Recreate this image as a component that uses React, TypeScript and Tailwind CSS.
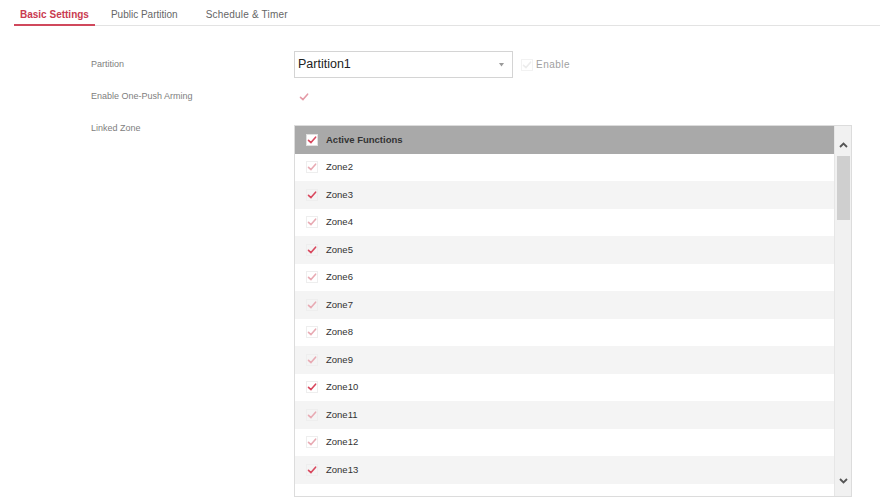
import React from "react";

function Check({ color = "#e7a3ad", box = "#e4e4e4", bg = "transparent" }: { color?: string; box?: string; bg?: string }) {
  return (
    <svg width="12" height="12" viewBox="0 0 12 12" className="shrink-0">
      <rect x="0.5" y="0.5" width="11" height="11" fill={bg} stroke={box} />
      <polyline points="2.5,6.3 5,8.6 9.6,3.2" fill="none" stroke={color} strokeWidth="1.6" strokeLinecap="round" strokeLinejoin="round" />
    </svg>
  );
}

const zones = [
  { n: "Zone2", dark: false },
  { n: "Zone3", dark: true },
  { n: "Zone4", dark: false },
  { n: "Zone5", dark: true },
  { n: "Zone6", dark: false },
  { n: "Zone7", dark: false },
  { n: "Zone8", dark: false },
  { n: "Zone9", dark: false },
  { n: "Zone10", dark: true },
  { n: "Zone11", dark: false },
  { n: "Zone12", dark: false },
  { n: "Zone13", dark: true },
];

export default function App() {
  return (
    <div className="w-[893px] h-[498px] bg-white overflow-hidden font-['Liberation_Sans',Arial,sans-serif]">
      {/* Tabs */}
      <div className="ml-[14px] w-[866px] h-[26px] flex items-end border-b border-[#e3e3e3] text-[10px]">
        <div className="h-[26px] px-[6px] pt-[5px] flex items-center border-b-2 border-[#d0485c] -mb-px text-[#c93a50] font-bold">
          Basic Settings
        </div>
        <div className="h-[26px] px-[16px] pt-[5px] flex items-center text-[#666]">Public Partition</div>
        <div className="h-[26px] px-[12px] pt-[5px] flex items-center text-[#666] tracking-[0.2px]">Schedule &amp; Timer</div>
      </div>

      <div className="pl-[91px] pt-[25px]">
        {/* Partition */}
        <div className="flex items-center h-[27px]">
          <div className="w-[203px] text-[9px] text-[#808080]">Partition</div>
          <div className="w-[219px] h-[27px] border border-[#d4d4d4] flex items-center pl-[3px] pr-[8px]">
            <span className="flex-1 text-[12.5px] text-[#222]">Partition1</span>
            <svg width="5" height="4" viewBox="0 0 5 4">
              <polygon points="0,0 5,0 2.5,3.5" fill="#9a9a9a" />
            </svg>
          </div>
          <div className="ml-[8px] flex items-center gap-[3px]">
            <Check color="#ececec" box="#f2f2f2" />
            <span className="text-[10px] text-[#a0a0a0] tracking-[0.5px]">Enable</span>
          </div>
        </div>

        {/* One-push arming */}
        <div className="flex items-center h-[14px] mt-[12px]">
          <div className="w-[203px] text-[9px] text-[#808080]">Enable One-Push Arming</div>
          <div className="pl-[4px]">
            <Check color="#e49aa6" box="#ffffff" />
          </div>
        </div>

        {/* Linked zone */}
        <div className="flex items-start mt-[17px]">
          <div className="w-[203px] text-[9px] leading-[14px] text-[#808080]">Linked Zone</div>
          <div className="mt-[4px] w-[558px] h-[372px] border border-[#dcdcdc] flex overflow-hidden">
            <div className="flex-1 flex flex-col overflow-hidden">
              <div className="h-[27.5px] shrink-0 bg-[#a9a9a9] flex items-center pl-[11px] gap-[8px]">
                <Check color="#d9485e" box="#e0e0e0" bg="#ffffff" />
                <span className="text-[9.5px] text-[#333] font-bold">Active Functions</span>
              </div>
              {zones.map((z, i) => (
                <div
                  key={z.n}
                  className={`h-[27.5px] shrink-0 flex items-center pl-[11px] gap-[8px] ${i % 2 === 1 ? "bg-[#f4f4f4]" : "bg-white"}`}
                >
                  <Check color={z.dark ? "#d9485e" : "#e8aab3"} box="#eeeeee" />
                  <span className="text-[9.5px] text-[#333]">{z.n}</span>
                </div>
              ))}
              <div className="h-[27.5px] shrink-0 flex items-start pl-[11px] pt-[12px] bg-white">
                <div className="w-[12px] h-[2px] bg-[#e6e6e6]" />
              </div>
            </div>
            <div className="w-[17px] shrink-0 bg-[#f1f1f1] border-l border-[#e6e6e6] flex flex-col items-center">
              <div className="h-[28px] w-full flex items-end justify-center pb-[6px]">
                <svg width="9" height="6" viewBox="0 0 9 6">
                  <polyline points="1,5 4.5,1.5 8,5" fill="none" stroke="#555" strokeWidth="1.8" />
                </svg>
              </div>
              <div className="w-[13px] h-[64px] bg-[#cfcfcf] mt-[2px]" />
              <div className="flex-1" />
              <div className="h-[22px] w-full flex items-start justify-center pt-[4px]">
                <svg width="9" height="6" viewBox="0 0 9 6">
                  <polyline points="1,1 4.5,4.5 8,1" fill="none" stroke="#555" strokeWidth="1.8" />
                </svg>
              </div>
            </div>
          </div>
        </div>
      </div>
    </div>
  );
}
